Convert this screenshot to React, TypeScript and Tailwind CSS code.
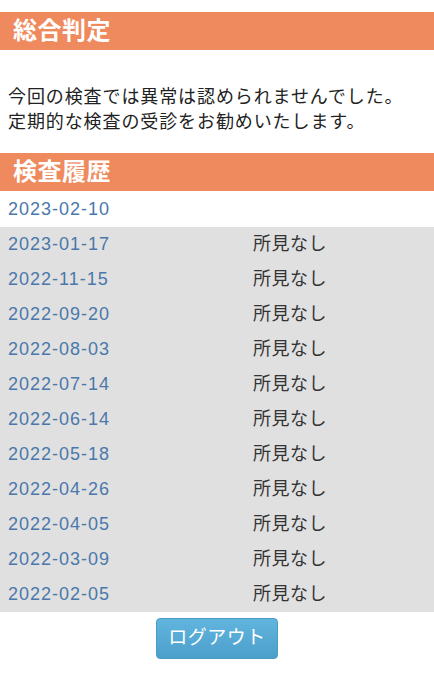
const history: { date: string; result: string }[] = [
  { date: "2023-02-10", result: "" },
  { date: "2023-01-17", result: "所見なし" },
  { date: "2022-11-15", result: "所見なし" },
  { date: "2022-09-20", result: "所見なし" },
  { date: "2022-08-03", result: "所見なし" },
  { date: "2022-07-14", result: "所見なし" },
  { date: "2022-06-14", result: "所見なし" },
  { date: "2022-05-18", result: "所見なし" },
  { date: "2022-04-26", result: "所見なし" },
  { date: "2022-04-05", result: "所見なし" },
  { date: "2022-03-09", result: "所見なし" },
  { date: "2022-02-05", result: "所見なし" },
];

const SectionTitle = ({ children }: { children: string }) => (
  <h2 className="h-[38px] bg-[#ef8a5e] pl-[13px] flex items-center text-white text-[24px] font-bold leading-none tracking-[0.5px]">
    {children}
  </h2>
);

export default function App() {
  return (
    <div
      className="min-h-[680px] bg-white pt-[12px] text-[#333]"
      style={{ fontFamily: '"Liberation Sans", "Noto Sans CJK JP", sans-serif' }}
    >
      <SectionTitle>総合判定</SectionTitle>

      {/* Summary */}
      <p className="px-[8px] pt-[35px] pb-[18px] text-[18px] leading-[25px] tracking-[0.9px] text-[#222]">
        今回の検査では異常は認められませんでした。
        <br />
        定期的な検査の受診をお勧めいたします。
      </p>

      <SectionTitle>検査履歴</SectionTitle>

      {/* History */}
      <div className="flex flex-col pt-[1px]">
        {history.map((row, index) => (
          <div
            key={row.date}
            className={`h-[35px] flex items-center ${index === 0 ? "bg-white" : "bg-[#e0e0e0]"}`}
          >
            <span className="w-[253px] pl-[8px] text-[18px] tracking-[1px] text-[#4a78ab]">
              {row.date}
            </span>
            <span className="text-[18px] tracking-[0.5px] text-[#333]">{row.result}</span>
          </div>
        ))}
      </div>

      {/* Logout */}
      <div className="flex justify-center pt-[6px]">
        <button className="w-[122px] h-[41px] rounded-[4px] border border-[#4a9bc6] bg-gradient-to-b from-[#60b5dd] to-[#4c9fcb] text-white text-[19px] tracking-[0.5px]">
          ログアウト
        </button>
      </div>
    </div>
  );
}
